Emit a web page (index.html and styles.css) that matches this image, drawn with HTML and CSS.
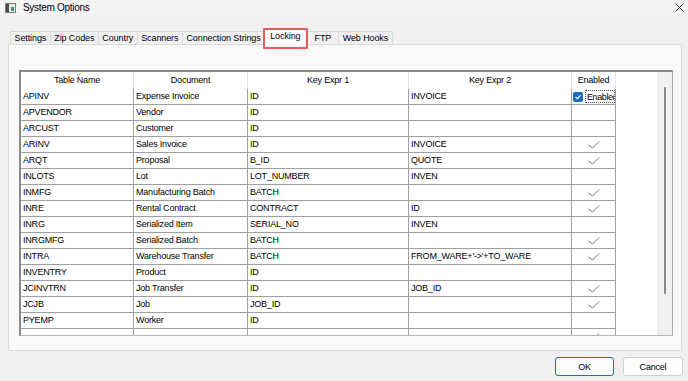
FILE: index.html
```html
<!DOCTYPE html>
<html lang="en">
  <head>
  <link rel="stylesheet" href="styles.css">
  </head>
  <body>
    <div class="titlebar">
      <svg class="app-icon" width="11" height="10" viewBox="0 0 11 10">
        <rect x="0.5" y="0.5" width="10" height="9" fill="#e8eef2" stroke="#7d7d7d"/>
        <rect x="1" y="1" width="3" height="8" fill="#4b4b4b"/>
        <rect x="6" y="4" width="3" height="4" fill="#3c9a5c"/>
      </svg>
      <span class="title">System Options</span>
      <svg class="close" width="9" height="9" viewBox="0 0 9 9">
        <path d="M0.5 0.5 L8.5 8.5 M8.5 0.5 L0.5 8.5" stroke="#333" stroke-width="1" fill="none"/>
      </svg>
    </div>

    <div class="tabs">
      <div class="tab">Settings</div>
      <div class="tab">Zip Codes</div>
      <div class="tab">Country</div>
      <div class="tab">Scanners</div>
      <div class="tab">Connection Strings</div>
      <div class="tab active">Locking</div>
      <div class="tab ftp">FTP</div>
      <div class="tab">Web Hooks</div>
    </div>

    <div class="panel">
      <div class="grid">
        <div class="rows">
          <div class="row head">
            <div class="cell">Table Name<svg class="sort" width="5" height="3" viewBox="0 0 5 3"><polyline points="0.5,0.5 2.5,2.5 4.5,0.5" fill="none" stroke="#9a9a9a"/></svg></div>
            <div class="cell">Document</div>
            <div class="cell">Key Expr 1</div>
            <div class="cell">Key Expr 2</div>
            <div class="cell">Enabled</div>
          </div>
          <div class="row">
            <div class="cell">APINV</div>
            <div class="cell">Expense Invoice</div>
            <div class="cell">ID</div>
            <div class="cell">INVOICE</div>
            <div class="cell edit">
              <span class="box"><svg width="10" height="10" viewBox="0 0 10 10"><polyline points="2.5,5 4.2,6.7 7.5,3.3" fill="none" stroke="#fff" stroke-width="1.1"/></svg></span>
              <span class="focus">Enabled</span>
            </div>
          </div>
          <div class="row"><div class="cell">APVENDOR</div><div class="cell">Vendor</div><div class="cell">ID</div><div class="cell"></div><div class="cell"></div></div>
          <div class="row"><div class="cell">ARCUST</div><div class="cell">Customer</div><div class="cell">ID</div><div class="cell"></div><div class="cell"></div></div>
          <div class="row"><div class="cell">ARINV</div><div class="cell">Sales Invoice</div><div class="cell">ID</div><div class="cell">INVOICE</div><div class="cell check"><svg width="12" height="8" viewBox="0 0 12 8"><polyline points="0.5,3.8 4.5,7 11,0.5" fill="none" stroke="#707070"/></svg></div></div>
          <div class="row"><div class="cell">ARQT</div><div class="cell">Proposal</div><div class="cell">B_ID</div><div class="cell">QUOTE</div><div class="cell check"><svg width="12" height="8" viewBox="0 0 12 8"><polyline points="0.5,3.8 4.5,7 11,0.5" fill="none" stroke="#707070"/></svg></div></div>
          <div class="row"><div class="cell">INLOTS</div><div class="cell">Lot</div><div class="cell">LOT_NUMBER</div><div class="cell">INVEN</div><div class="cell"></div></div>
          <div class="row"><div class="cell">INMFG</div><div class="cell">Manufacturing Batch</div><div class="cell">BATCH</div><div class="cell"></div><div class="cell check"><svg width="12" height="8" viewBox="0 0 12 8"><polyline points="0.5,3.8 4.5,7 11,0.5" fill="none" stroke="#707070"/></svg></div></div>
          <div class="row"><div class="cell">INRE</div><div class="cell">Rental Contract</div><div class="cell">CONTRACT</div><div class="cell">ID</div><div class="cell check"><svg width="12" height="8" viewBox="0 0 12 8"><polyline points="0.5,3.8 4.5,7 11,0.5" fill="none" stroke="#707070"/></svg></div></div>
          <div class="row"><div class="cell">INRG</div><div class="cell">Serialized Item</div><div class="cell">SERIAL_NO</div><div class="cell">INVEN</div><div class="cell"></div></div>
          <div class="row"><div class="cell">INRGMFG</div><div class="cell">Serialized Batch</div><div class="cell">BATCH</div><div class="cell"></div><div class="cell check"><svg width="12" height="8" viewBox="0 0 12 8"><polyline points="0.5,3.8 4.5,7 11,0.5" fill="none" stroke="#707070"/></svg></div></div>
          <div class="row"><div class="cell">INTRA</div><div class="cell">Warehouse Transfer</div><div class="cell">BATCH</div><div class="cell">FROM_WARE+'-&gt;'+TO_WARE</div><div class="cell check"><svg width="12" height="8" viewBox="0 0 12 8"><polyline points="0.5,3.8 4.5,7 11,0.5" fill="none" stroke="#707070"/></svg></div></div>
          <div class="row"><div class="cell">INVENTRY</div><div class="cell">Product</div><div class="cell">ID</div><div class="cell"></div><div class="cell"></div></div>
          <div class="row"><div class="cell">JCINVTRN</div><div class="cell">Job Transfer</div><div class="cell">ID</div><div class="cell">JOB_ID</div><div class="cell check"><svg width="12" height="8" viewBox="0 0 12 8"><polyline points="0.5,3.8 4.5,7 11,0.5" fill="none" stroke="#707070"/></svg></div></div>
          <div class="row"><div class="cell">JCJB</div><div class="cell">Job</div><div class="cell">JOB_ID</div><div class="cell"></div><div class="cell check"><svg width="12" height="8" viewBox="0 0 12 8"><polyline points="0.5,3.8 4.5,7 11,0.5" fill="none" stroke="#707070"/></svg></div></div>
          <div class="row"><div class="cell">PYEMP</div><div class="cell">Worker</div><div class="cell">ID</div><div class="cell"></div><div class="cell"></div></div>
          <div class="row"><div class="cell"></div><div class="cell"></div><div class="cell"></div><div class="cell"></div><div class="cell check"><svg width="12" height="8" viewBox="0 0 12 8"><polyline points="0.5,3.8 4.5,7 11,0.5" fill="none" stroke="#707070"/></svg></div></div>
        </div>
        <div class="blank"></div>
        <div class="scroll"><div class="thumb"></div></div>
      </div>
    </div>

    <div class="footer">
      <button class="btn default">OK</button>
      <button class="btn">Cancel</button>
    </div>
  </body>
</html>
```

FILE: styles.css
```css
html, body { margin: 0; padding: 0; }
body {
  width: 688px; height: 381px; overflow: hidden;
  background: #f0f0f0; color: #000;
  font: 9px "Liberation Sans", Arial, sans-serif; letter-spacing: -0.2px;
}
button { font: inherit; letter-spacing: inherit; color: #000; }

/* title bar */
.titlebar { height: 15px; display: flex; align-items: center; padding: 0 4px 0 5px; background: #f3f3f3; }
.app-icon { margin-right: 7px; }
.title { flex: 1; font-size: 10px; letter-spacing: -0.3px; }

/* tab strip */
.tabs { display: flex; align-items: flex-end; height: 16px; margin: 13px 0 0 10px; letter-spacing: -0.1px; }
.tab {
  box-sizing: border-box; height: 13px; line-height: 12px; padding: 0 3.5px;
  border: 1px solid #d9d9d9; border-bottom: none; margin-right: -1px;
  background: #f0f0f0; white-space: nowrap;
}
.tab.ftp { padding: 0 7px; }
.tab.active {
  height: 17px; line-height: 15px; margin: 0 0 -1px 0; padding: 0 5px;
  background: #fff; position: relative; z-index: 1;
}
.tab.active::after {
  content: ""; position: absolute; left: -2px; right: -2px; top: -1px; bottom: -4px;
  border: 2px solid #e25d5d; border-radius: 1px;
}

.panel {
  box-sizing: border-box; height: 307px; margin: 0 6px 0 8px;
  border: 1px solid #dcdcdc; background: #f9f9f9;
  padding: 25px 0 0 10px;
}

/* data grid */
.grid {
  box-sizing: border-box; width: 654px; height: 266px; display: flex; background: #fff;
  border-style: solid; border-width: 2px 1px 1px 2px;
  border-color: #8a8a8a #a8a8a8 #b8b8b8 #8a8a8a;
}
.rows { width: 595px; overflow: hidden; }
.blank { flex: 1; }
.scroll { width: 15px; background: #f0f0f0; display: flex; justify-content: center; padding-top: 15px; box-sizing: border-box; }
.thumb { width: 2px; height: 207px; background: #8a8a8a; border-radius: 1px; }

.row { display: grid; grid-template-columns: 113px 114px 161px 163px 44px; height: 16px; }
.cell {
  box-sizing: border-box; border-right: 1px solid #a0a0a0; border-bottom: 1px solid #a0a0a0;
  padding-left: 2px; line-height: 15px; white-space: nowrap; overflow: hidden;
}
.row.head { height: 17px; }
.head .cell { border-bottom: none; border-right-color: #e4e4e4; text-align: center; line-height: 17px; padding: 0; position: relative; }
.sort { position: absolute; left: 55px; top: 1px; }

.check { display: flex; align-items: center; justify-content: center; padding: 0; }
.edit { display: flex; align-items: center; padding-left: 1px; }
.box { width: 10px; height: 10px; border-radius: 2px; background: #1b6ec2; flex: none; display: flex; }
.focus {
  flex: 1; margin-left: 2px; height: 13px; line-height: 12px; box-sizing: border-box;
  border: 1px dotted #555; padding-left: 1px; overflow: hidden; letter-spacing: -0.4px;
}

/* buttons */
.footer { display: flex; justify-content: flex-end; gap: 9px; padding: 6px 5px 0 0; }
.btn {
  box-sizing: border-box; width: 60px; height: 19px; padding: 0;
  border: 1px solid #d0d0d0; border-radius: 3px; background: #fdfdfd;
}
.btn.default { width: 59px; border-color: #1b6ec2; }
```
